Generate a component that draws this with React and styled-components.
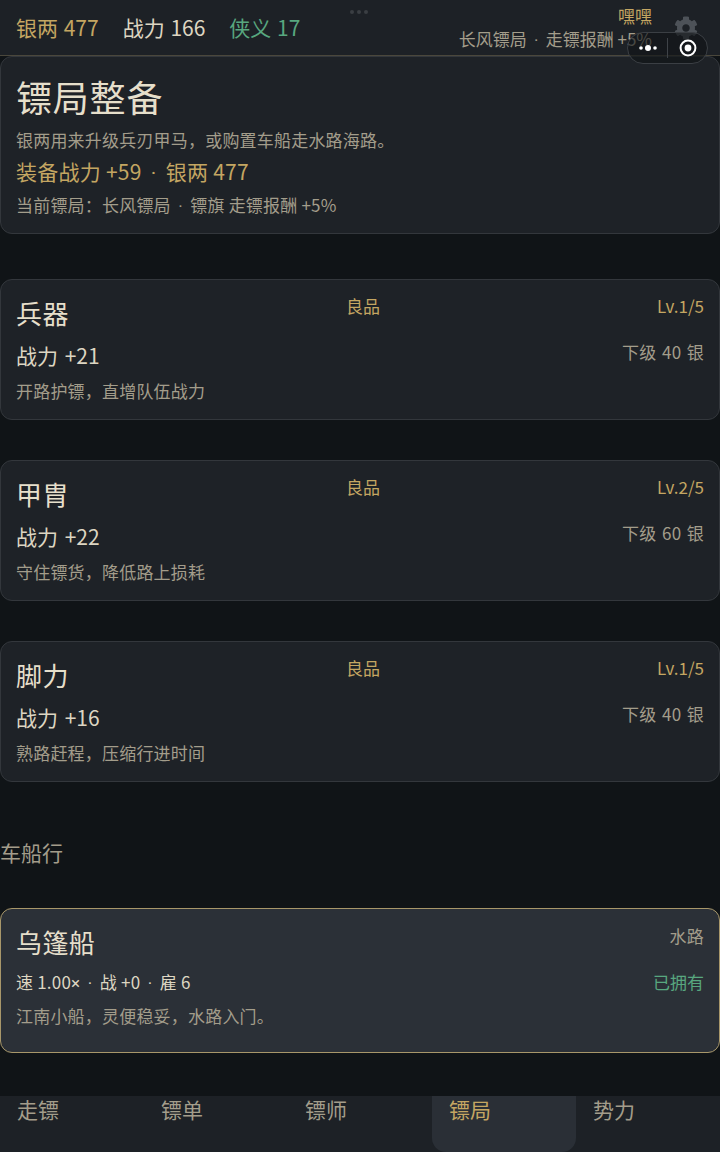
import React from "react"
import styled, { createGlobalStyle } from "styled-components"
import { FaCog } from "react-icons/fa"

const Global = createGlobalStyle`
  html, body {
    margin: 0;
    padding: 0;
    background: #101417;
  }
  * {
    box-sizing: border-box;
  }
`

const Page = styled.div`
  position: relative;
  width: 720px;
  height: 1152px;
  overflow: hidden;
  display: flex;
  flex-direction: column;
  background: #101417;
  color: #e6dfcb;
  font-family: "Noto Sans CJK SC", Roboto, sans-serif;
`

const TopBar = styled.header`
  height: 56px;
  flex-shrink: 0;
  display: flex;
  justify-content: space-between;
  background: #1d2126;
  border-bottom: 1px solid #4a473c;
  padding-left: 16px;
`
const Stats = styled.div`
  display: flex;
  gap: 24px;
  padding-top: 13px;
`
const Stat = styled.span`
  font-size: 21px;
  line-height: 28px;
  word-spacing: 1px;
  color: ${(p) => p.$color};
`
const TopRight = styled.div`
  display: flex;
  align-items: flex-start;
`
const Guild = styled.div`
  display: flex;
  flex-direction: column;
  align-items: flex-end;
  padding-top: 4px;
`
const GuildName = styled.span`
  font-size: 17px;
  line-height: 24px;
  color: #c4a662;
`
const GuildBonus = styled.span`
  font-size: 17px;
  line-height: 24px;
  margin-top: -1px;
  color: #a39d8b;
  white-space: nowrap;
`
const GearSlot = styled.div`
  width: 68px;
  padding: 16px 0 0 22px;
  color: #4d5258;
  font-size: 24px;
  line-height: 0;
`
const Capsule = styled.div`
  position: absolute;
  top: 32px;
  left: 627px;
  width: 81px;
  height: 32px;
  display: flex;
  align-items: center;
  background: rgba(16, 20, 23, 0.62);
  border: 1px solid #3b3f44;
  border-radius: 16px;
`
const CapsulePart = styled.div`
  flex: 1;
  height: 100%;
  display: flex;
  align-items: center;
  justify-content: center;
`
const CapsuleLine = styled.div`
  width: 1px;
  height: 20px;
  background: #3f4348;
`
const DragDots = styled.div`
  position: absolute;
  top: 10px;
  left: 350px;
  display: flex;
  gap: 3px;
`
const DragDot = styled.i`
  width: 4px;
  height: 4px;
  border-radius: 50%;
  background: #3a3e43;
`

// the CJK font draws · and × far too wide, so these two take the latin font
const Latin = styled.span`
  font-family: Roboto, sans-serif;
`
const Sep = styled(Latin)`
  margin: 0 0.2em;
`

const Content = styled.main`
  flex: 1;
  display: flex;
  flex-direction: column;
`
const Card = styled.section`
  background: ${(p) => (p.$owned ? "#2b3037" : "#1e2227")};
  border: 1px solid ${(p) => (p.$owned ? "#a8976a" : "#33373c")};
  border-radius: 12px;
  padding: 13px 15px 15px;
  margin-bottom: 40px;
`
const Hero = styled(Card)`
  height: 178px;
  padding-top: 13px;
  margin-bottom: 45px;
`
const HeroTitle = styled.h1`
  margin: 0;
  font-size: 36px;
  font-weight: 400;
  line-height: 52px;
  letter-spacing: 0.8px;
  color: #e6dfcb;
`
const Muted = styled.div`
  font-size: 17px;
  line-height: 26px;
  letter-spacing: 0.2px;
  color: #a39d8b;
`
const HeroDesc = styled(Muted)`
  margin-top: 5px;
`
const HeroGold = styled.div`
  font-size: 21px;
  line-height: 30px;
  letter-spacing: 0.25px;
  margin-top: 3px;
  color: #c4a662;
`
const HeroNote = styled(Muted)`
  margin-top: 4px;
`
const GearCard = styled(Card)`
  height: 141px;
`
const Row = styled.div`
  display: flex;
  justify-content: space-between;
  align-items: flex-start;
`
const ItemName = styled.h2`
  margin: 0;
  font-size: 26px;
  font-weight: 400;
  line-height: 40px;
  letter-spacing: 0.4px;
  color: #e6dfcb;
`
const Tier = styled.span`
  font-size: 17px;
  line-height: 26px;
  color: #c4a662;
`
const Power = styled.div`
  font-size: 21px;
  line-height: 30px;
  word-spacing: 2px;
  margin-top: 7px;
  color: #ddd6c2;
`
const Price = styled(Muted)`
  margin-top: 6px;
  word-spacing: 1.5px;
`
const ItemDesc = styled(Muted)`
  margin-top: 8px;
`
const SectionTitle = styled.h3`
  margin: 0;
  height: 86px;
  padding-top: 15px;
  font-size: 21px;
  font-weight: 400;
  line-height: 30px;
  color: #a39d8b;
`
const ShipCard = styled(Card)`
  height: 145px;
  margin-bottom: 0;
`
const Route = styled(Muted)`
  margin-top: 1px;
`
const ShipStats = styled.div`
  font-size: 17px;
  line-height: 26px;
  letter-spacing: 0.2px;
  margin-top: 7px;
  color: #ddd6c2;
`
const Owned = styled.span`
  font-size: 17px;
  line-height: 26px;
  margin-top: 7px;
  color: #58a77f;
`
const ShipDesc = styled(Muted)`
  margin-top: 7px;
`

const TabBar = styled.nav`
  height: 56px;
  flex-shrink: 0;
  display: grid;
  grid-template-columns: repeat(5, 144px);
  background: #1d2126;
`
const Tab = styled.div`
  padding-left: 17px;
  font-size: 21px;
  line-height: 26px;
  color: ${(p) => (p.$active ? "#c4a662" : "#a39d8b")};
  background: ${(p) => (p.$active ? "#2a2f36" : "transparent")};
  border-radius: 0 0 14px 14px;
`

const gears = [
  { name: "兵器", tier: "良品", level: "Lv.1/5", power: "战力 +21", price: "下级 40 银", desc: "开路护镖，直增队伍战力" },
  { name: "甲胄", tier: "良品", level: "Lv.2/5", power: "战力 +22", price: "下级 60 银", desc: "守住镖货，降低路上损耗" },
  { name: "脚力", tier: "良品", level: "Lv.1/5", power: "战力 +16", price: "下级 40 银", desc: "熟路赶程，压缩行进时间" },
]

const tabs = ["走镖", "镖单", "镖师", "镖局", "势力"]

const App = () => (
  <Page>
    <Global />
    <TopBar>
      <Stats>
        <Stat $color="#c4a662">银两 477</Stat>
        <Stat $color="#ddd6c2">战力 166</Stat>
        <Stat $color="#58a77f">侠义 17</Stat>
      </Stats>
      <TopRight>
        <Guild>
          <GuildName>嘿嘿</GuildName>
          <GuildBonus>
            长风镖局 <Sep>·</Sep> 走镖报酬 +5%
          </GuildBonus>
        </Guild>
        <GearSlot>
          <FaCog />
        </GearSlot>
      </TopRight>
    </TopBar>
    <DragDots>
      <DragDot />
      <DragDot />
      <DragDot />
    </DragDots>
    <Capsule>
      <CapsulePart>
        <svg width="20" height="8" viewBox="0 0 20 8">
          <circle cx="3" cy="4" r="1.8" fill="#fff" />
          <circle cx="10" cy="4" r="3" fill="#fff" />
          <circle cx="17" cy="4" r="1.8" fill="#fff" />
        </svg>
      </CapsulePart>
      <CapsuleLine />
      <CapsulePart>
        <svg width="20" height="20" viewBox="0 0 20 20">
          <circle cx="10" cy="10" r="7.4" fill="none" stroke="#fff" strokeWidth="2" />
          <circle cx="10" cy="10" r="3.4" fill="#fff" />
        </svg>
      </CapsulePart>
    </Capsule>
    <Content>
      <Hero>
        <HeroTitle>镖局整备</HeroTitle>
        <HeroDesc>银两用来升级兵刃甲马，或购置车船走水路海路。</HeroDesc>
        <HeroGold>
          装备战力 +59 <Sep>·</Sep> 银两 477
        </HeroGold>
        <HeroNote>
          当前镖局：长风镖局 <Sep>·</Sep> 镖旗 走镖报酬 +5%
        </HeroNote>
      </Hero>
      {gears.map((g) => (
        <GearCard key={g.name}>
          <Row>
            <ItemName>{g.name}</ItemName>
            <Tier>{g.tier}</Tier>
            <Tier>{g.level}</Tier>
          </Row>
          <Row>
            <Power>{g.power}</Power>
            <Price>{g.price}</Price>
          </Row>
          <ItemDesc>{g.desc}</ItemDesc>
        </GearCard>
      ))}
      <SectionTitle>车船行</SectionTitle>
      <ShipCard $owned>
        <Row>
          <ItemName>乌篷船</ItemName>
          <Route>水路</Route>
        </Row>
        <Row>
          <ShipStats>
            速 1.00<Latin>×</Latin> <Sep>·</Sep> 战 +0 <Sep>·</Sep> 雇 6
          </ShipStats>
          <Owned>已拥有</Owned>
        </Row>
        <ShipDesc>江南小船，灵便稳妥，水路入门。</ShipDesc>
      </ShipCard>
    </Content>
    <TabBar>
      {tabs.map((t) => (
        <Tab key={t} $active={t === "镖局"}>
          {t}
        </Tab>
      ))}
    </TabBar>
  </Page>
)

export default App
